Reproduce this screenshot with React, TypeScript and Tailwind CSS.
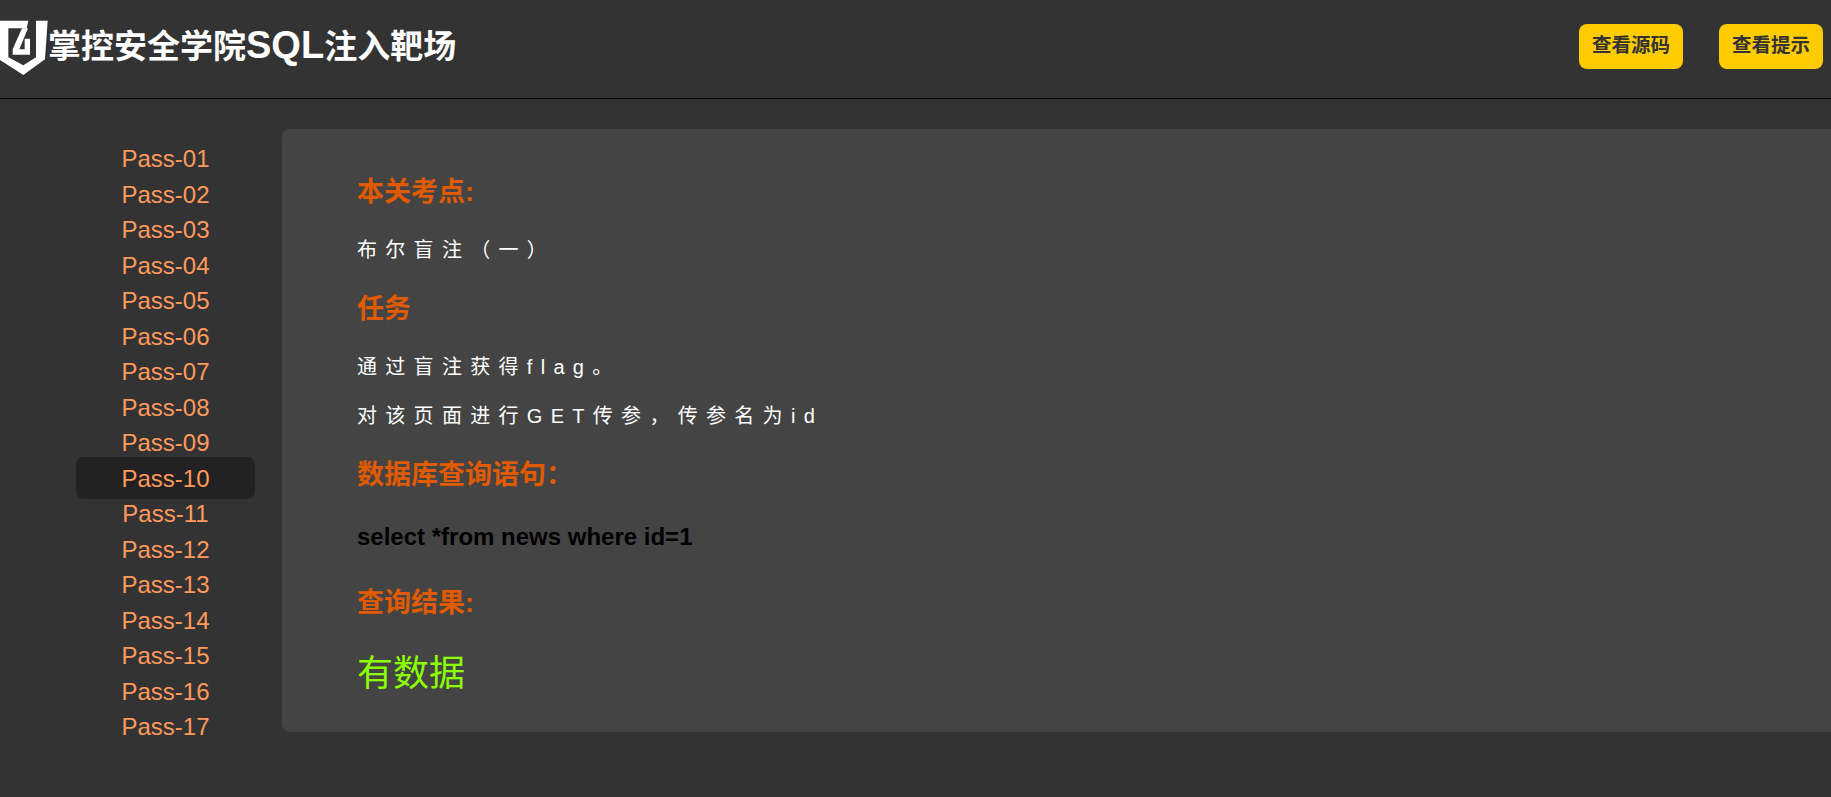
import React from 'react';

const passes = ['01', '02', '03', '04', '05', '06', '07', '08', '09', '10', '11', '12', '13', '14', '15', '16', '17'];
const activePass = '10';

const Logo = () => (
  <svg width="48" height="56" viewBox="0 0 144 168" className="mt-[4px] shrink-0">
    <path fill="#fff" d="M0 2H85L80 25H25V112L70 136L108 112V2H143L135 118L70 165L0 120Z" />
    <path fill="#fff" d="M66 25H84L58 88H74V56H90V104H38V88Z" />
  </svg>
);

const Heading = ({ children, className }: { children: React.ReactNode; className: string }) => (
  <h2 className={`text-[27px] leading-[36px] font-bold text-[#e05a00] ${className}`}>{children}</h2>
);

const Body = ({ children, className }: { children: React.ReactNode; className: string }) => (
  <p className={`text-[20px] leading-[28px] tracking-[8.3px] text-white ${className}`}>{children}</p>
);

export default function App() {
  return (
    <div className="min-h-[797px] overflow-hidden bg-[#333333] font-['Liberation_Sans','Noto_Sans_CJK_SC',sans-serif]">
      <header className="flex h-[99px] items-center justify-between border-b border-black pr-2 pb-[6px]">
        <div className="flex items-center">
          <Logo />
          <span className="text-[33px] leading-[40px] font-bold text-white">
            掌控安全学院<span className="text-[38px]">SQL</span>注入靶场
          </span>
        </div>
        <div className="flex gap-9">
          <button className="h-[45px] w-[104px] rounded-lg bg-[#ffcc00] text-[19.5px] font-bold text-[#333333]">查看源码</button>
          <button className="h-[45px] w-[104px] rounded-lg bg-[#ffcc00] text-[19.5px] font-bold text-[#333333]">查看提示</button>
        </div>
      </header>
      <main className="flex">
        <nav className="flex w-[282px] shrink-0 flex-col items-stretch pt-[42px] pl-[76px] pr-[27px]">
          {passes.map((pass) => (
            <a
              key={pass}
              href="#"
              className={
                pass === activePass
                  ? 'relative -mt-[4px] -mb-[3px] rounded-lg bg-[#222222] pt-[4px] pb-[3px] text-center text-[24px] leading-[35.5px] text-[#ff9a5c]'
                  : 'relative text-center text-[24px] leading-[35.5px] text-[#ff9a5c]'
              }
            >
              Pass-{pass}
            </a>
          ))}
        </nav>
        <section className="mt-[30px] h-[603px] flex-1 rounded-l-lg bg-[#444444] pl-[75px] pt-[45px]">
          <Heading className="">本关考点:</Heading>
          <Body className="mt-[26px]">布尔盲注（一）</Body>
          <Heading className="mt-[27px]">任务</Heading>
          <Body className="mt-[26px]">通过盲注获得flag。</Body>
          <Body className="mt-[21px]">对该页面进行GET传参，传参名为id</Body>
          <Heading className="mt-[27px]">数据库查询语句：</Heading>
          <p className="mt-[27px] text-[24px] leading-[34px] font-bold text-black">select *from news where id=1</p>
          <Heading className="mt-[31px]">查询结果:</Heading>
          <p className="mt-[28px] text-[36px] leading-[50px] text-[#8cff00]">有数据</p>
        </section>
      </main>
    </div>
  );
}
